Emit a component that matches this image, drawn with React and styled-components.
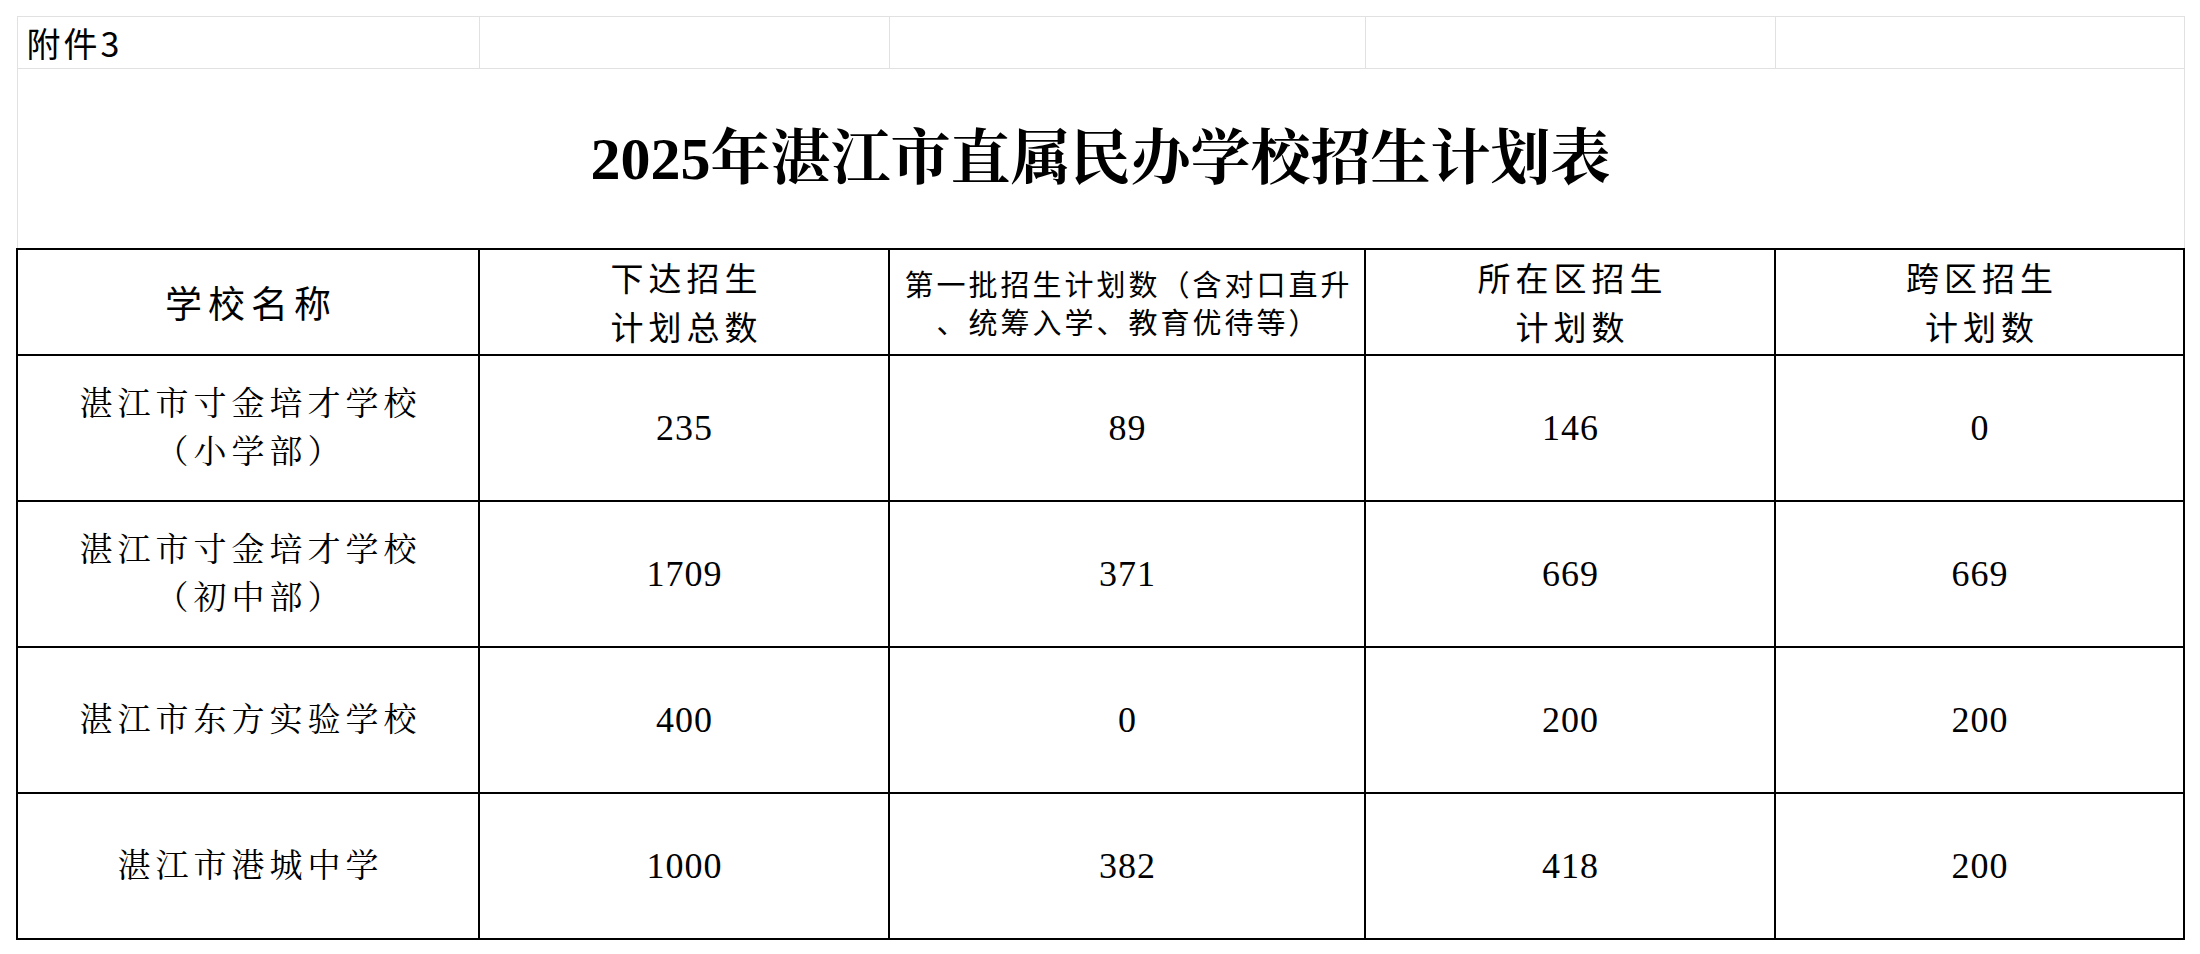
import React from "react";
import styled, { createGlobalStyle } from "styled-components";

const GlobalStyle = createGlobalStyle`
  html, body {
    margin: 0;
    padding: 0;
    background: #fff;
  }
  body {
    font-family: "Noto Sans CJK SC", sans-serif;
    color: #000;
  }
`;

const Page = styled.div`
  width: 2200px;
  height: 954px;
  box-sizing: border-box;
  padding: 16px 0 0 16px;
  background: #fff;
  overflow: hidden;
`;

const Sheet = styled.table`
  border-collapse: collapse;
  table-layout: fixed;
  width: 2167px;
`;

const GridCell = styled.td`
  border: 1px solid #e1e1e1;
  height: 51px;
  padding: 0 0 0 9px;
  font-family: "Noto Sans CJK SC", sans-serif;
  font-size: 34px;
  letter-spacing: 3px;
  line-height: 1;
  vertical-align: middle;
  white-space: nowrap;
`;

const TitleCell = styled.td`
  border: 1px solid #e1e1e1;
  border-bottom: 2px solid #000;
  height: 179px;
  padding: 0;
  text-align: center;
  vertical-align: middle;
  font-family: "Liberation Serif", "Noto Serif CJK SC", "Noto Sans CJK SC", serif;
  font-weight: 700;
  font-size: 60px;
  line-height: 1;
  white-space: nowrap;
`;

const HeadCell = styled.td`
  border: 2px solid #000;
  height: 104px;
  padding: 0 0 0 ${(p) => p.$spacing}px;
  text-align: center;
  vertical-align: middle;
  font-family: "Noto Sans CJK SC", sans-serif;
  font-size: ${(p) => p.$size}px;
  letter-spacing: ${(p) => p.$spacing}px;
  line-height: ${(p) => p.$lh}px;
  white-space: nowrap;
`;

const NameCell = styled.td`
  border: 2px solid #000;
  height: 144px;
  padding: 0 0 0 5px;
  text-align: center;
  vertical-align: middle;
  font-family: "Liberation Serif", "Noto Serif CJK SC", "Noto Sans CJK SC", serif;
  font-size: 33px;
  letter-spacing: 5px;
  line-height: 48px;
  white-space: nowrap;
`;

const NumCell = styled.td`
  border: 2px solid #000;
  height: 144px;
  padding: 0 0 0 1px;
  text-align: center;
  vertical-align: middle;
  font-family: "Liberation Serif", "Noto Serif CJK SC", serif;
  font-size: 36px;
  letter-spacing: 1px;
  line-height: 1;
`;

const widths = [462, 410, 476, 410, 409];

const headers = [
  { lines: ["学校名称"], size: 37, spacing: 6, lh: 48 },
  { lines: ["下达招生", "计划总数"], size: 33, spacing: 5, lh: 49 },
  { lines: ["第一批招生计划数（含对口直升", "、统筹入学、教育优待等）"], size: 29, spacing: 3, lh: 38 },
  { lines: ["所在区招生", "计划数"], size: 33, spacing: 5, lh: 49 },
  { lines: ["跨区招生", "计划数"], size: 33, spacing: 5, lh: 49 },
];

const rows = [
  { name: ["湛江市寸金培才学校", "（小学部）"], nums: [235, 89, 146, 0] },
  { name: ["湛江市寸金培才学校", "（初中部）"], nums: [1709, 371, 669, 669] },
  { name: ["湛江市东方实验学校"], nums: [400, 0, 200, 200] },
  { name: ["湛江市港城中学"], nums: [1000, 382, 418, 200] },
];

const Lines = ({ lines }) =>
  lines.map((l, i) => (
    <React.Fragment key={i}>
      {i > 0 && <br />}
      {l}
    </React.Fragment>
  ));

export default function App() {
  return (
    <>
      <GlobalStyle />
      <Page>
        <Sheet>
          <colgroup>
            {widths.map((w, i) => (
              <col key={i} style={{ width: w }} />
            ))}
          </colgroup>
          <tbody>
            <tr>
              <GridCell>附件3</GridCell>
              <GridCell />
              <GridCell />
              <GridCell />
              <GridCell />
            </tr>
            <tr>
              <TitleCell colSpan={5}>2025年湛江市直属民办学校招生计划表</TitleCell>
            </tr>
            <tr>
              {headers.map((h, i) => (
                <HeadCell key={i} $size={h.size} $spacing={h.spacing} $lh={h.lh}>
                  <Lines lines={h.lines} />
                </HeadCell>
              ))}
            </tr>
            {rows.map((r, i) => (
              <tr key={i}>
                <NameCell>
                  <Lines lines={r.name} />
                </NameCell>
                {r.nums.map((n, j) => (
                  <NumCell key={j}>{n}</NumCell>
                ))}
              </tr>
            ))}
          </tbody>
        </Sheet>
      </Page>
    </>
  );
}
